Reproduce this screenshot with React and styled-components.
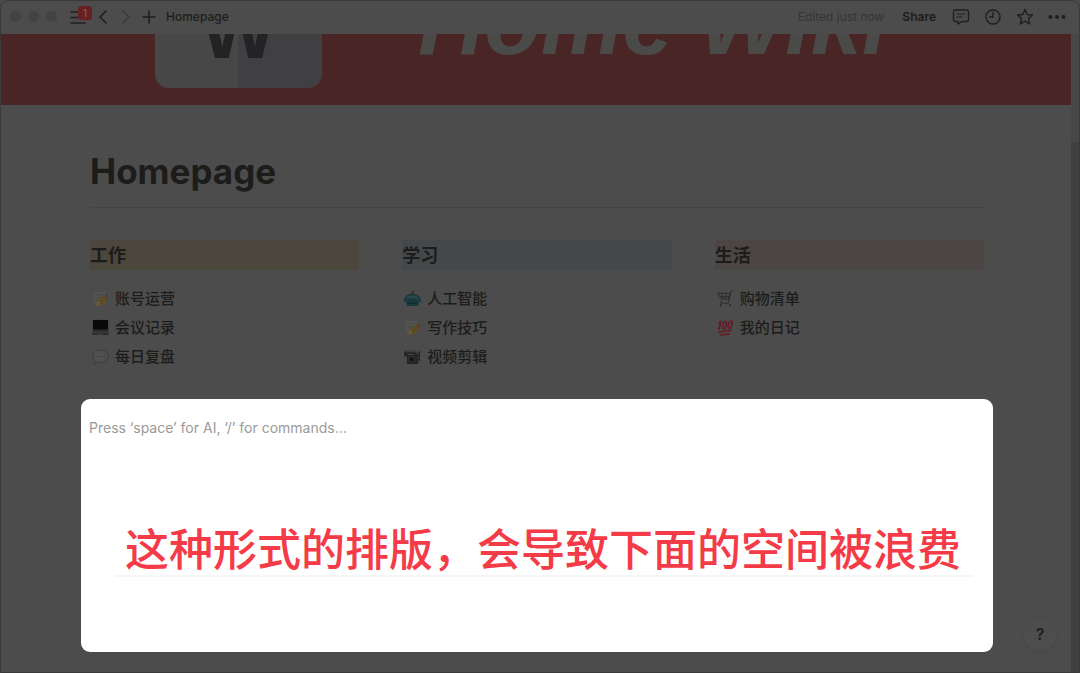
import React from "react";
import styled, { createGlobalStyle } from "styled-components";

const Global = createGlobalStyle`
  * { box-sizing: border-box; }
  body {
    margin: 0;
    background: #4c4c4c;
    color: #1c1c1a;
    font-family: Inter, "Noto Sans CJK SC", sans-serif;
  }
  button, input { font: inherit; color: inherit; }
  a { color: inherit; text-decoration: none; }
`;

const Window = styled.div`
  display: flex;
  flex-direction: column;
  min-height: 100vh;
  border: 1px solid #3a3a3a;
  border-radius: 8px 8px 0 0;
`;

const TopBar = styled.header`
  display: flex;
  align-items: center;
  justify-content: space-between;
  height: 33px;
  padding: 0 11px 2px 9px;
  font-size: 12px;
  line-height: 16px;
`;

const BarGroup = styled.div`
  display: flex;
  align-items: center;
  gap: ${(p) => p.$gap}px;
`;

const Lights = styled.div`
  display: flex;
  gap: 7px;
  margin-right: 5px;
`;

const Light = styled.span`
  width: 11px;
  height: 11px;
  border-radius: 50%;
  background: #434343;
`;

const IconButton = styled.button`
  display: flex;
  align-items: center;
  justify-content: center;
  position: relative;
  width: ${(p) => p.$w || 18}px;
  height: 24px;
  padding: 0;
  border: 0;
  background: none;
  color: ${(p) => (p.$faint ? "#393939" : "#1f1f1e")};
`;

const Badge = styled.span`
  position: absolute;
  left: 11px;
  top: 1px;
  width: 14px;
  height: 14px;
  border-radius: 3px;
  background: #671f22;
  color: #8a6464;
  font-size: 10px;
  line-height: 14px;
`;

const Crumb = styled.a`
  margin-left: 3px;
  font-weight: 500;
`;

const Edited = styled.span`
  color: #353534;
`;

const ShareButton = styled.button`
  margin: 0 4px 0 8px;
  padding: 0;
  border: 0;
  background: none;
  font-weight: 600;
`;

const Body = styled.div`
  display: flex;
  flex: 1;
`;

const Page = styled.main`
  flex: 1;
  min-width: 0;
`;

const Track = styled.div`
  display: flex;
  width: 8px;
  padding-top: 108px;
  background: #474745;
`;

const Thumb = styled.div`
  flex: 1;
  background: #404040;
`;

const Banner = styled.div`
  display: flex;
  align-items: flex-start;
  gap: 96px;
  height: 71px;
  padding-left: 154px;
  overflow: hidden;
  background: #4a2525;
`;

const LogoCard = styled.div`
  display: flex;
  align-items: flex-end;
  justify-content: center;
  width: 167px;
  height: 54px;
  flex: none;
  overflow: hidden;
  border-radius: 0 0 14px 14px;
  background: linear-gradient(to right, #474747 50%, #404042 50%);
  color: #232325;
  font: bold 80px/80px "Liberation Sans", sans-serif;
  padding-bottom: 17px;
`;

const BannerTitle = styled.div`
  display: flex;
  align-items: flex-end;
  height: 34px;
  flex: none;
  white-space: nowrap;
  color: #4a4a48;
  font: italic bold 92px/92px "Liberation Sans", sans-serif;
`;

const Content = styled.div`
  padding: 0 78px 20px 80px;
`;

const Inset = styled.div`
  padding: 0 9px;
`;

const Title = styled.h1`
  margin: 0;
  padding: 43px 0 13px;
  font-size: 35px;
  line-height: 46px;
  font-weight: 700;
  border-bottom: 1px solid #444;
`;

const Columns = styled.div`
  display: grid;
  grid-template-columns: repeat(3, 1fr);
  gap: 43px;
  height: 159px;
  margin-top: 32px;
`;

const ColumnTitle = styled.h2`
  margin: 0 0 14px;
  padding-top: 2px;
  font-size: 18px;
  line-height: 28px;
  font-weight: 700;
  background: ${(p) => p.$tone};
`;

const List = styled.ul`
  margin: 0;
  padding: 0;
  list-style: none;
`;

const Item = styled.a`
  display: flex;
  align-items: center;
  gap: 6px;
  height: 29px;
  padding-left: 2px;
  font-size: 15px;
  line-height: 20px;
  font-weight: 500;
`;

const Spotlight = styled.section`
  min-height: 253px;
  padding: 17px 20px 20px 8px;
  border-radius: 9px;
  background: #fff;
`;

const Prompt = styled.input`
  display: block;
  width: 100%;
  height: 22px;
  padding: 0;
  border: 0;
  outline: 0;
  background: none;
  font-size: 14px;
  &::placeholder { color: #9a9a98; opacity: 1; }
`;

const Callout = styled.p`
  margin: 88px 0 0 26px;
  padding-left: 10px;
  border-bottom: 2px solid #f6f6f6;
  color: #f53b48;
  font-size: 44px;
  line-height: 49px;
  font-weight: 500;
  white-space: nowrap;
`;

const Help = styled.button`
  position: fixed;
  right: 23px;
  bottom: 22px;
  width: 34px;
  height: 34px;
  padding: 0;
  border: 0;
  border-radius: 50%;
  background: #4d4d4d;
  box-shadow: 0 1px 2px #464646;
  font-size: 16px;
  font-weight: 600;
`;

const Line = ({ children, sw = 1.4 }) => (
  <svg width="18" height="18" viewBox="0 0 18 18" fill="none" stroke="currentColor" strokeWidth={sw} strokeLinecap="round" strokeLinejoin="round" aria-hidden="true">
    {children}
  </svg>
);

const drawings = {
  memo: (
    <>
      <path d="M2 2h12v14H2z" fill="#535351" />
      <path d="M4 5h8M4 8h7M4 11h4" stroke="#484847" />
      <path d="M4 16l3-6 7-5 3 4-5 6-5 2z" fill="#5d4b21" />
      <path d="M4 16l3-6 2 5-3 2z" fill="#695b3d" />
      <path d="M14 5l1-1 2 4-1 1z" fill="#533438" />
    </>
  ),
  laptop: (
    <>
      <path d="M1 1h16v11H1z" fill="#090909" />
      <path d="M1 11h16l1 6H0z" fill="#2c2c2c" />
      <path d="M1 14h16M6 16h6" stroke="#424242" />
    </>
  ),
  bubble: (
    <>
      <path d="M9 2C4 2 1 5 1 9c0 2 1 4 2 5l-1 3 4-2c7 2 11-2 11-6 0-5-4-7-8-7z" fill="#505050" stroke="#363636" strokeWidth=".8" />
      <path d="M5 9h1M9 9h1M13 9h1" stroke="#292929" strokeWidth="1.3" />
    </>
  ),
  robot: (
    <>
      <path d="M9 1v4" stroke="#492726" strokeWidth="2" />
      <path d="M1 9c0-3 4-5 8-5s8 2 8 5l-2 8H3z" fill="#19393d" />
      <path d="M3 8c2-3 10-3 12 0v2H3z" fill="#2d4c50" />
      <path d="M5 8l2 3 2-3 2 3 2-3" stroke="#152d31" fill="none" />
      <path d="M5 14h8M0 9v4M18 9v4" stroke="#0b2b31" strokeWidth="1.5" />
    </>
  ),
  camera: (
    <>
      <path d="M0 3h13v3l4-3v11l-2-1v4H3V9H0z" fill="#252525" />
      <path d="M1 4h12M4 7h6M14 7l2-1M14 10l2 1" stroke="#4a4a4a" />
      <circle cx="8" cy="12" r="3" fill="#121212" stroke="#3c3c3c" />
    </>
  ),
  cart: (
    <>
      <path d="M17 1h-2l-3 13H4M1 3l13 1-2 6-8-1zM5 4l2 6M9 5v5M3 7h10M5 10l-1 4" fill="none" stroke="#2c2c2f" strokeWidth="1" />
      <circle cx="4" cy="16" r="1" fill="#1e1e1e" />
      <circle cx="14" cy="16" r="1" fill="#1e1e1e" />
    </>
  ),
  hundred: (
    <g fill="none" stroke="#641c26" strokeWidth="1.8" strokeLinecap="round">
      <path d="M2 4l2-1-2 8" />
      <ellipse cx="8" cy="6.5" rx="1.8" ry="4" transform="rotate(15 8 6.5)" />
      <ellipse cx="14" cy="6" rx="1.8" ry="4" transform="rotate(15 14 6)" />
      <path d="M2 14c4-1 8-2 13-2M4 17c3-1 6-1 9-1" />
    </g>
  ),
};

const columns = [
  { title: "工作", tone: "#4b473c", items: [["memo", "账号运营"], ["laptop", "会议记录"], ["bubble", "每日复盘"]] },
  { title: "学习", tone: "#44484a", items: [["robot", "人工智能"], ["memo", "写作技巧"], ["camera", "视频剪辑"]] },
  { title: "生活", tone: "#4b4544", items: [["cart", "购物清单"], ["hundred", "我的日记"]] },
];

export default function App() {
  return (
    <>
      <Global />
      <Window>
        <TopBar>
          <BarGroup $gap={5}>
            <Lights><Light /><Light /><Light /></Lights>
            <IconButton aria-label="Menu" $w={22}>
              <Line><path d="M2 4h14M2 9.500h14M2 15h14" /></Line>
              <Badge>1</Badge>
            </IconButton>
            <IconButton aria-label="Back"><Line sw={1.7}><path d="M12 3L6 9l6 6" /></Line></IconButton>
            <IconButton aria-label="Forward" $faint><Line><path d="M6 3l6 6-6 6" /></Line></IconButton>
            <IconButton aria-label="New page"><Line sw={1.6}><path d="M9 3v12M3 9h12" /></Line></IconButton>
            <Crumb href="#">Homepage</Crumb>
          </BarGroup>
          <BarGroup $gap={10}>
            <Edited>Edited just now</Edited>
            <ShareButton>Share</ShareButton>
            <IconButton aria-label="Comments" $w={22}>
              <Line><path d="M3.500 2h11q2 0 2 2v7.500q0 2-2 2H10L6 16v-2.500H3.500q-2 0-2-2V4q0-2 2-2z" /><path d="M5 6h8M5 9h5" strokeWidth="1.100" /></Line>
            </IconButton>
            <IconButton aria-label="Updates" $w={22}>
              <Line><circle cx="9" cy="9" r="7" /><path d="M9 4.500V9H5.500" /></Line>
            </IconButton>
            <IconButton aria-label="Favorite" $w={22}>
              <Line><path d="M9 1.500l2.200 5 5.300.5-4 3.600 1.200 5.400L9 13.200 4.300 16l1.200-5.400-4-3.600 5.300-.5z" /></Line>
            </IconButton>
            <IconButton aria-label="More" $w={22}>
              <Line><g fill="currentColor" stroke="none"><circle cx="2.500" cy="9" r="2" /><circle cx="9" cy="9" r="2" /><circle cx="15.500" cy="9" r="2" /></g></Line>
            </IconButton>
          </BarGroup>
        </TopBar>
        <Body>
          <Page>
            <Banner>
              <LogoCard>W</LogoCard>
              <BannerTitle>Home Wiki</BannerTitle>
            </Banner>
            <Content>
              <Inset>
                <Title>Homepage</Title>
                <Columns>
                  {columns.map((c) => (
                    <section key={c.title}>
                      <ColumnTitle $tone={c.tone}>{c.title}</ColumnTitle>
                      <List>
                        {c.items.map(([icon, label]) => (
                          <li key={label}>
                            <Item href="#">
                              <svg width="17" height="17" viewBox="0 0 18 18" aria-hidden="true">{drawings[icon]}</svg>
                              {label}
                            </Item>
                          </li>
                        ))}
                      </List>
                    </section>
                  ))}
                </Columns>
              </Inset>
              <Spotlight>
                <Prompt aria-label="Page text" placeholder="Press ‘space’ for AI, ‘/’ for commands…" />
                <Callout>这种形式的排版，会导致下面的空间被浪费</Callout>
              </Spotlight>
            </Content>
          </Page>
          <Track><Thumb /></Track>
        </Body>
      </Window>
      <Help aria-label="Help">?</Help>
    </>
  );
}
